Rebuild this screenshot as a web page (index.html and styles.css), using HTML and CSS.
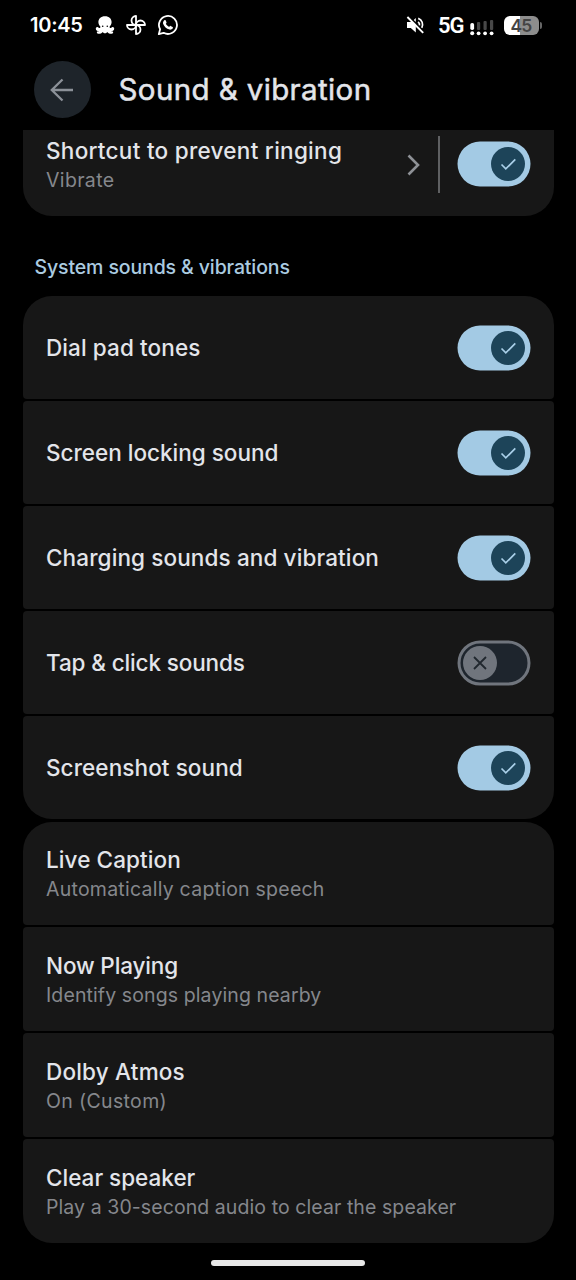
FILE: index.html
```html
<!DOCTYPE html>
<html lang="en">
<head>
<meta charset="utf-8">
<title>Sound &amp; vibration</title>
<link rel="stylesheet" href="styles.css">
</head>
<body>
<svg class="defs" width="0" height="0" aria-hidden="true">
  <symbol id="switch-on" viewBox="0 0 74 46">
    <rect x="0.5" y="0.5" width="73" height="45" rx="22.5" fill="#a3cae4"/>
    <circle cx="51" cy="23" r="17" fill="#1d4459"/>
    <path d="M44.5 23.5l4.3 4.4 9.5-9.6" fill="none" stroke="#a9cfe8" stroke-width="1.7"/>
  </symbol>
  <symbol id="switch-off" viewBox="0 0 74 46">
    <rect x="2" y="2" width="70" height="42" rx="21" fill="#1e252d" stroke="#70757d" stroke-width="3"/>
    <circle cx="23" cy="23" r="17" fill="#70757d"/>
    <path d="M17 17l12 12M29 17L17 29" fill="none" stroke="#20272e" stroke-width="1.8"/>
  </symbol>
</svg>
<div class="screen">
  <header class="status">
    <span class="clock">10:45</span>
    <svg class="octopus" width="20" height="20" viewBox="0 0 20 20">
      <path fill="#fff" d="M10 1.200c-4.200 0-6.600 2.600-6.600 6 0 2 1.100 3.200 1.900 4.300.4.800-.2 1.700-1 1.600-.9-.1-1-1-1.800-1-.9 0-1.700.7-1.700 1.600 0 1.500 1.600 2.500 3.400 2.300-.8.400-1.700.2-2.200.8-.5.800.1 1.900 1.200 2 1.800.2 3.400-.5 4.700-1.900.3.700 1 1.400 2.100 1.400s1.800-.7 2.100-1.400c1.300 1.400 2.900 2.100 4.700 1.900 1.100-.1 1.700-1.200 1.200-2-.5-.6-1.400-.4-2.200-.8 1.800.2 3.400-.8 3.400-2.300 0-.9-.8-1.600-1.700-1.600-.8 0-.9.9-1.800 1-.8.100-1.400-.8-1-1.600.8-1.100 1.900-2.300 1.900-4.300 0-3.400-2.400-6-6.600-6z"/>
      <circle cx="7.700" cy="11.300" r=".8" fill="#000"/><circle cx="12.300" cy="11.300" r=".8" fill="#000"/>
    </svg>
    <svg class="pinwheel" width="20" height="20" viewBox="0 0 20 20" fill="none" stroke="#fff" stroke-width="1.800" stroke-linejoin="round">
      <path d="M10 10V1A4.500 4.500 0 0 0 10 10"/>
      <path d="M10 10V1A4.500 4.500 0 0 0 10 10" transform="rotate(90 10 10)"/>
      <path d="M10 10V1A4.500 4.500 0 0 0 10 10" transform="rotate(180 10 10)"/>
      <path d="M10 10V1A4.500 4.500 0 0 0 10 10" transform="rotate(270 10 10)"/>
    </svg>
    <svg class="whatsapp" width="22" height="22" viewBox="0 0 22 22">
      <path d="M1.800 20.200l1.300-4.900a9 9 0 1 1 3.500 3.500z" fill="none" stroke="#fff" stroke-width="1.800" stroke-linejoin="round"/>
      <path fill="#fff" d="M7.300 6.200c.3-.3 1-.4 1.300.1l.9 2c.2.500-.1.900-.7 1.500.8 1.500 1.900 2.400 3.400 3.100.6-.7.900-1.200 1.400-1l2 1c.5.300.3 1.200 0 1.700-.6.900-2 1.300-3.100 1-3.200-.9-5.300-2.900-6.300-5.500-.5-1.500.1-3 1.100-3.900z"/>
    </svg>
    <span class="spacer"></span>
    <svg class="muted" width="20" height="20" viewBox="0 0 20 20">
      <path fill="#fff" d="M1 7v6h3.800l5 4.600V10.500L6.200 7zM9.800 3L7.800 5l2 2z"/>
      <path d="M1.400 2l15.800 15.800" stroke="#fff" stroke-width="1.900"/>
      <path d="M12 7c1.300.8 1.800 2 1.500 3.400M12.200 3.400c4 1.400 5.400 5.800 3.600 9.400" fill="none" stroke="#fff" stroke-width="1.700"/>
    </svg>
    <span class="network">5G</span>
    <svg class="signal" width="24" height="16" viewBox="0 0 24 16">
      <g fill="#484848"><rect x="7" y="2" width="3.200" height="8" rx="1"/><rect x="13.500" y="1" width="3.200" height="9" rx="1"/><rect x="20" y="0" width="3.200" height="10" rx="1"/></g>
      <g fill="#fff"><rect x=".3" y="3" width="3.800" height="7" rx="1.700"/><circle cx="2.200" cy="13.300" r="2"/><circle cx="8.600" cy="13.300" r="1.900"/><circle cx="15.100" cy="13.300" r="1.900"/><circle cx="21.600" cy="13.300" r="1.900"/></g>
    </svg>
    <span class="battery">45</span><span class="battery-tip"></span>
  </header>

  <div class="toolbar">
    <span class="back"><svg width="26" height="26" viewBox="0 0 26 26" fill="none" stroke="#8c9198" stroke-width="2.300"><path d="M24 13H3M13.500 2.500L2.800 13l10.700 10.500"/></svg></span>
    <h1 class="heading">Sound &amp; vibration</h1>
  </div>

  <main class="content">
    <section class="card clipped">
      <div class="copy"><div class="title t-shortcut">Shortcut to prevent ringing</div><div class="sub s-vibrate">Vibrate</div></div>
      <svg class="chevron" width="14" height="22" viewBox="0 0 14 22"><path d="M1.500 1.500L11 11l-9.500 9.500" fill="none" stroke="#8e9196" stroke-width="2.600"/></svg>
      <span class="rule"></span>
      <svg class="switch"><use href="#switch-on"/></svg>
    </section>

    <h2 class="section">System sounds &amp; vibrations</h2>

    <section class="group toggles">
      <div class="card"><div class="title t-dial">Dial pad tones</div><svg class="switch"><use href="#switch-on"/></svg></div>
      <div class="card"><div class="title t-lock">Screen locking sound</div><svg class="switch"><use href="#switch-on"/></svg></div>
      <div class="card"><div class="title t-charge">Charging sounds and vibration</div><svg class="switch"><use href="#switch-on"/></svg></div>
      <div class="card"><div class="title t-tap">Tap &amp; click sounds</div><svg class="switch"><use href="#switch-off"/></svg></div>
      <div class="card"><div class="title t-shot">Screenshot sound</div><svg class="switch"><use href="#switch-on"/></svg></div>
    </section>

    <section class="group links">
      <div class="card"><div class="copy"><div class="title t-live">Live Caption</div><div class="sub s-live">Automatically caption speech</div></div></div>
      <div class="card"><div class="copy"><div class="title t-now">Now Playing</div><div class="sub s-now">Identify songs playing nearby</div></div></div>
      <div class="card"><div class="copy"><div class="title t-dolby">Dolby Atmos</div><div class="sub s-dolby">On (Custom)</div></div></div>
      <div class="card"><div class="copy"><div class="title t-clear">Clear speaker</div><div class="sub s-clear">Play a 30-second audio to clear the speaker</div></div></div>
    </section>
  </main>
  <div class="home"></div>
</div>
</body>
</html>
```
FILE: styles.css
```css
* { box-sizing: border-box; }
body { margin: 0; background: #000; color: #e3e5ea; font-family: Inter, "Open Sans", sans-serif; }
.defs { display: block; height: 0; }
.screen { width: 576px; height: 1280px; overflow: hidden; display: flex; flex-direction: column; }
svg { flex: none; }

.status { height: 50px; flex: none; display: flex; align-items: center; padding: 0 34px 0 30px; color: #fff; }
.clock { width: 65px; font-size: 20px; font-weight: 600; letter-spacing: -.25px; white-space: nowrap; }
.pinwheel { margin-left: 11px; }
.whatsapp { margin-left: 11px; }
.spacer { flex: 1; }
.network { margin-left: 12px; width: 32px; font: 600 22px Roboto, sans-serif; letter-spacing: -1px; white-space: nowrap; }
.signal { margin-top: 5px; }
.battery { margin-left: 10px; width: 35px; height: 19px; border-radius: 6px; background: linear-gradient(90deg, #fff 46%, #8d8d8d 46%); color: #444; font-size: 17.5px; line-height: 19px; font-weight: 600; letter-spacing: -.8px; text-align: center; padding-right: 1px; }
.battery-tip { width: 2px; height: 7px; margin-left: 1px; border-radius: 0 2px 2px 0; background: #666; }

.toolbar { height: 79px; flex: none; display: flex; align-items: center; gap: 28px; padding-left: 33.5px; }
.back { width: 57px; height: 57px; border-radius: 50%; background: #1e242a; display: flex; align-items: center; justify-content: center; }
.heading { margin: 0 0 2px; font-size: 29.5px; font-weight: 400; -webkit-text-stroke: .5px; white-space: nowrap; letter-spacing: .38px; }

.content { padding: 1px 22.5px 0; }
.card { background: #171717; border-radius: 4px; padding: 0 23px 0 23.5px; display: flex; align-items: center; }
.title { flex: 1; font-size: 22.5px; line-height: 30px; font-weight: 500; white-space: nowrap; }
.sub { color: #85878c; font-size: 19.5px; line-height: 28px; white-space: nowrap; }
.copy { flex: 1; }
.switch { width: 74px; height: 46px; }
.clipped { height: 86px; align-items: flex-start; border-radius: 0 0 29px 29px; }
.clipped .copy { padding-top: 6px; }
.clipped .chevron { margin-top: 23.5px; }
.clipped .rule { width: 2px; height: 57px; margin: 6px 17px 0 16.5px; background: #5f6062; }
.clipped .switch { margin-top: 11px; }
.section { margin: 36px 0 0 12px; height: 44px; font-size: 19.5px; line-height: 31px; font-weight: 500; color: #abcbe0; white-space: nowrap; letter-spacing: -.12px; }

.group { display: grid; gap: 2.5px; }
.group .card:first-child { border-radius: 29px 29px 4px 4px; }
.group .card:last-child { border-radius: 4px 4px 29px 29px; }
.toggles .card { height: 102.5px; padding-top: .5px; }
.links { margin-top: 3px; gap: 2.7px; }
.links .card { height: 103.3px; padding-top: 2px; }
.home { width: 154px; height: 6px; border-radius: 3px; background: #e8e8e8; margin: 17px auto 0 211px; }

.t-shortcut { letter-spacing: .28px; }
.t-dial { letter-spacing: .1px; }
.t-charge { letter-spacing: .12px; }
.t-tap { letter-spacing: -.13px; }
.t-shot { letter-spacing: .09px; }
.t-live { letter-spacing: .1px; }
.t-now { letter-spacing: -.13px; }
.t-dolby { letter-spacing: .2px; }
.s-vibrate { letter-spacing: .35px; }
.s-live { letter-spacing: .24px; }
.s-now { letter-spacing: .11px; }
.s-dolby { letter-spacing: .35px; }
.s-clear { letter-spacing: .08px; }
```
